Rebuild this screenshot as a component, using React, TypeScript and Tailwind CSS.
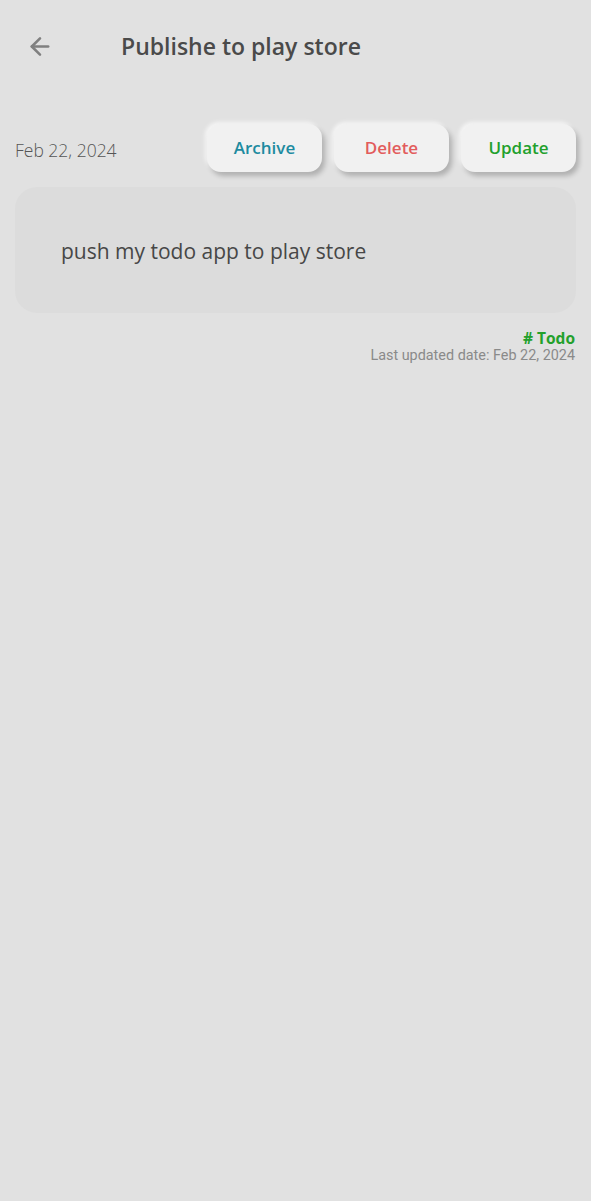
import { ArrowLeft } from 'lucide-react'

const font = { fontFamily: '"Open Sans", "Noto Sans", sans-serif' }

function ActionButton({ label, color }: { label: string; color: string }) {
  return (
    <button
      className={`flex h-[48px] w-[115px] items-center justify-center rounded-[14px] bg-[#f1f1f1] text-[17px] font-semibold shadow-[3px_4px_5px_rgba(0,0,0,0.22),-2px_-2px_4px_rgba(255,255,255,0.7)] ${color}`}
    >
      {label}
    </button>
  )
}

export default function App() {
  return (
    <div className="min-h-[1201px] w-full bg-[#e1e1e1]" style={font}>
      <header className="flex h-[94px] items-center pb-[1px]">
        <button className="ml-[26px] flex h-[24px] w-[28px] items-center justify-center text-[#808080]">
          <ArrowLeft size={29} strokeWidth={2.2} />
        </button>
        <h1 className="ml-[67px] text-[23px] font-semibold text-[#4a4a4a]">Publishe to play store</h1>
      </header>

      <div className="flex items-center justify-between pl-[15px] pr-[15px] pt-[30px]">
        <span className="mt-[4px] text-[17.5px] font-light text-[#555555]">Feb 22, 2024</span>
        <div className="flex gap-[12px]">
          <ActionButton label="Archive" color="text-[#1d8ba0]" />
          <ActionButton label="Delete" color="text-[#e25c5c]" />
          <ActionButton label="Update" color="text-[#22a02c]" />
        </div>
      </div>

      <div className="mx-[15px] mt-[15px] flex h-[126px] items-center rounded-[22px] bg-[#dcdcdc] pt-[3px] pl-[46px]">
        <p className="text-[21px] text-[#474747]">push my todo app to play store</p>
      </div>

      <div className="mt-[16px] flex flex-col items-end pr-[16px]">
        <span className="text-[15.5px] leading-[18px] font-bold text-[#23a02c]"># Todo</span>
        <span className="text-[14.4px] leading-[17px] text-[#8a8a8a]" style={{ fontFamily: 'Roboto, sans-serif' }}>
          Last updated date: Feb 22, 2024
        </span>
      </div>
    </div>
  )
}
